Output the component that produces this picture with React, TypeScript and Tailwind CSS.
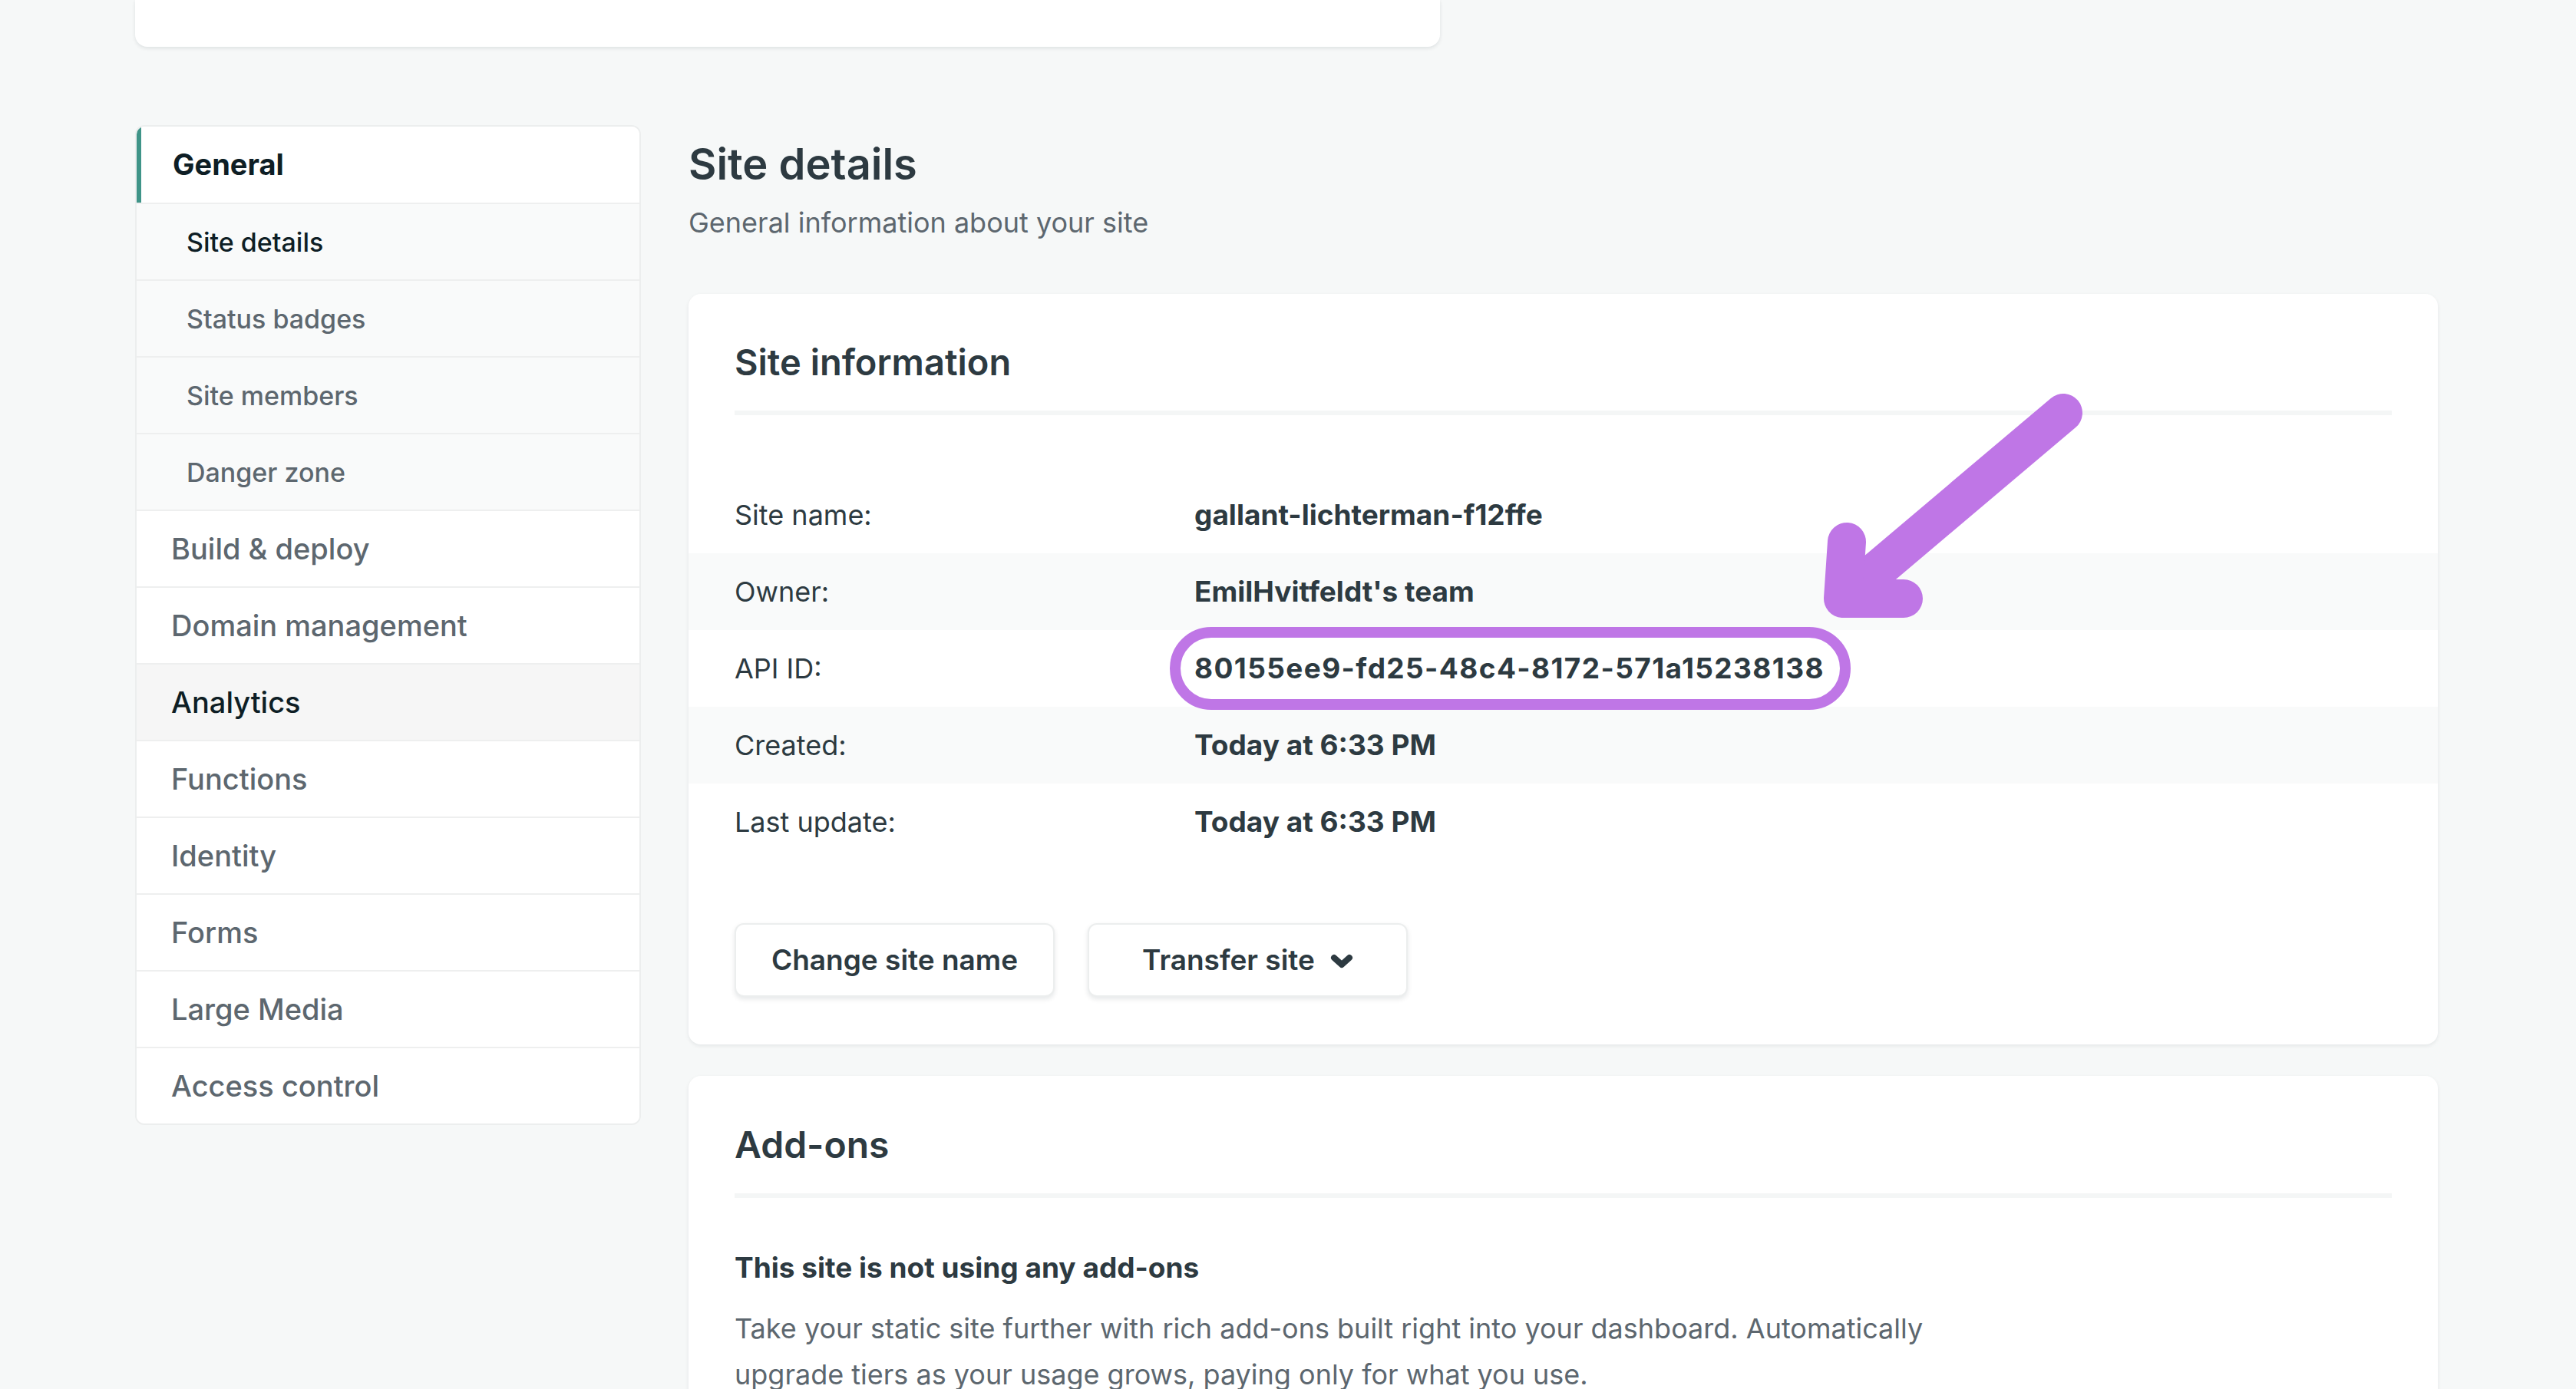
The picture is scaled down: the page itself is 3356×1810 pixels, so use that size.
import React from "react";

const FONT = { fontFamily: "Inter, 'Noto Sans', 'Liberation Sans', sans-serif" };

type NavItem = { label: string; kind: "head" | "sub" | "main"; active?: boolean; hover?: boolean };

const nav: NavItem[] = [
  { label: "General", kind: "head" },
  { label: "Site details", kind: "sub", active: true },
  { label: "Status badges", kind: "sub" },
  { label: "Site members", kind: "sub" },
  { label: "Danger zone", kind: "sub" },
  { label: "Build & deploy", kind: "main" },
  { label: "Domain management", kind: "main" },
  { label: "Analytics", kind: "main", hover: true },
  { label: "Functions", kind: "main" },
  { label: "Identity", kind: "main" },
  { label: "Forms", kind: "main" },
  { label: "Large Media", kind: "main" },
  { label: "Access control", kind: "main" },
];

function Sidebar() {
  return (
    <nav className="w-[659px] shrink-0 self-start overflow-hidden rounded-[12px] border-2 border-[#eceeee] bg-white">
      {nav.map((item, i) => {
        if (item.kind === "head") {
          return (
            <div
              key={i}
              className="flex h-[99px] items-center border-l-[6px] border-[#3f9488] bg-white pl-[41px] text-[38px] font-bold text-[#0e1e25]"
            >
              {item.label}
            </div>
          );
        }
        if (item.kind === "sub") {
          return (
            <div
              key={i}
              className={
                "flex h-[100px] items-center border-t-2 border-[#eeefef] bg-[#f9fafa] pl-[65px] text-[34px] font-medium " +
                (item.active ? "text-[#0e1e25]" : "text-[#5d676f]")
              }
            >
              {item.label}
            </div>
          );
        }
        return (
          <div
            key={i}
            className={
              "flex h-[100px] items-center border-t-2 border-[#eeefef] pl-[45px] text-[38px] font-medium " +
              (item.hover ? "bg-[#f6f6f6] text-[#0e1e25]" : "bg-white text-[#5d676f]")
            }
          >
            {item.label}
          </div>
        );
      })}
    </nav>
  );
}

const rows: { label: string; value: string; shaded: boolean; ringed?: boolean }[] = [
  { label: "Site name:", value: "gallant-lichterman-f12ffe", shaded: false },
  { label: "Owner:", value: "EmilHvitfeldt's team", shaded: true },
  { label: "API ID:", value: "80155ee9-fd25-48c4-8172-571a15238138", shaded: false, ringed: true },
  { label: "Created:", value: "Today at 6:33 PM", shaded: true },
  { label: "Last update:", value: "Today at 6:33 PM", shaded: false },
];

function Button({ children }: { children: React.ReactNode }) {
  return (
    <button className="flex h-[96px] w-[417px] items-center justify-center gap-[20px] rounded-[12px] border-2 border-[#eceeee] bg-white text-[37px] font-semibold text-[#2d3a41] shadow-[0_3px_6px_rgba(14,30,37,0.10)]">
      {children}
    </button>
  );
}

function SiteInfoCard() {
  return (
    <section className="rounded-[16px] bg-white px-[60px] pb-[62px] pt-[60px] shadow-[0_2px_5px_rgba(14,30,37,0.08)]">
      <h2 className="text-[47px] font-semibold leading-[58px] text-[#2d3a41]">Site information</h2>
      <div className="mt-[34px] h-[6px] bg-[#f4f6f6]" />
      <div className="mt-[80px]">
        {rows.map((r) => (
          <div
            key={r.label}
            className={
              "-mx-[60px] flex h-[100px] items-center px-[60px] text-[36px] text-[#2d3a41] " +
              (r.shaded ? "bg-[#f9fafa]" : "bg-white")
            }
          >
            <div className="w-[599px] shrink-0">{r.label}</div>
            <div className={"relative text-[37px] font-bold " + (r.ringed ? "tracking-[1.4px]" : "")}>
              {r.value}
              {r.ringed && (
                <span className="pointer-events-none absolute -bottom-[26px] -left-[32px] -right-[34px] -top-[26px] rounded-full border-[14px] border-[#bf76e6]" />
              )}
            </div>
          </div>
        ))}
      </div>
      <div className="mt-[82px] flex gap-[43px]">
        <Button>Change site name</Button>
        <Button>
          <span>Transfer site</span>
          <svg width="30" height="20" viewBox="0 0 30 20" className="mt-[4px]">
            <path d="M5 5 L15 14 L25 5" fill="none" stroke="#2d3a41" strokeWidth="8" strokeLinecap="round" strokeLinejoin="round" />
          </svg>
        </Button>
      </div>
    </section>
  );
}

function AddOnsCard() {
  return (
    <section className="mt-[41px] rounded-[16px] bg-white px-[60px] pb-[80px] pt-[61px] shadow-[0_2px_5px_rgba(14,30,37,0.08)]">
      <h2 className="text-[48px] font-semibold leading-[58px] text-[#2d3a41]">Add-ons</h2>
      <div className="mt-[34px] h-[6px] bg-[#f4f6f6]" />
      <h3 className="mt-[67px] text-[37px] font-bold leading-[48px] text-[#2d3a41]">
        This site is not using any add-ons
      </h3>
      <p className="mt-[25px] max-w-[1600px] text-[36px] leading-[60px] text-[#5d676f]">
        Take your static site further with rich add-ons built right into your dashboard. Automatically upgrade tiers
        as your usage grows, paying only for what you use.
      </p>
    </section>
  );
}

export default function App() {
  return (
    <div className="relative h-[1810px] overflow-hidden bg-[#f6f8f8]" style={FONT}>
      <div className="ml-[176px] h-[61px] w-[1700px] rounded-b-[16px] bg-white shadow-[0_2px_5px_rgba(14,30,37,0.10)]" />
      <div className="mt-[102px] flex gap-[62px] pl-[176px] pr-[180px]">
        <Sidebar />
        <main className="min-w-0 flex-1">
          <h1 className="pt-[18px] text-[56px] font-semibold leading-[67px] text-[#2d3a41]">Site details</h1>
          <p className="mt-[18px] text-[36px] leading-[49px] text-[#5d676f]">General information about your site</p>
          <div className="mt-[68px]">
            <SiteInfoCard />
            <AddOnsCard />
          </div>
        </main>
      </div>
      <svg className="pointer-events-none absolute left-0 top-0" width="3356" height="1810" viewBox="0 0 3356 1810">
        <g fill="none" stroke="#bf76e6" strokeWidth="50" strokeLinecap="round" strokeLinejoin="round">
          <path d="M2688 538 L2404 778" />
          <path d="M2406 706 L2401 780 L2480 780" />
        </g>
      </svg>
    </div>
  );
}
